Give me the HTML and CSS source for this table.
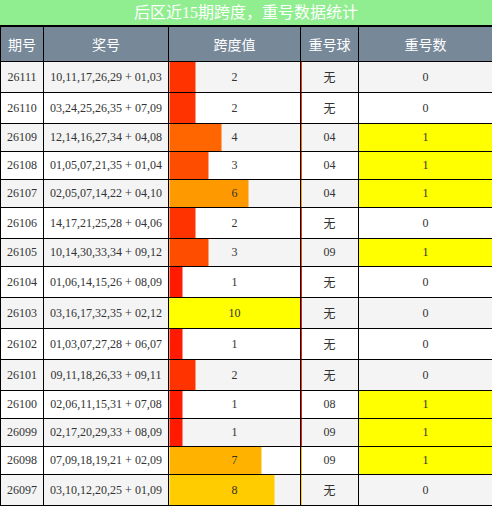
FILE: index.html
```html
<!DOCTYPE html>
<html lang="zh-CN">
<head>
  <meta charset="UTF-8" />
  <meta name="viewport" content="width=device-width, initial-scale=1.0" />
  <title>后区近15期跨度，重号数据统计</title>
  <link rel="stylesheet" href="styles.css">
</head>
<body>
  <div class="title">后区近15期跨度，重号数据统计</div>
  <table class="stats">
    <colgroup>
      <col class="c-issue">
      <col class="c-nums">
      <col class="c-span">
      <col class="c-ball">
      <col class="c-count">
    </colgroup>
    <thead>
      <tr>
        <th>期号</th>
        <th>奖号</th>
        <th>跨度值</th>
        <th>重号球</th>
        <th>重号数</th>
      </tr>
    </thead>
    <tbody>
      <tr><td>26111</td><td>10,11,17,26,29 + 01,03</td><td class="span" style="--w:20%;--c:#ff3300">2</td><td class="ball" style="--c:#ff3300">无</td><td>0</td></tr>
      <tr><td>26110</td><td>03,24,25,26,35 + 07,09</td><td class="span" style="--w:20%;--c:#ff3300">2</td><td class="ball" style="--c:#ff3300">无</td><td>0</td></tr>
      <tr><td>26109</td><td>12,14,16,27,34 + 04,08</td><td class="span" style="--w:40%;--c:#ff6600">4</td><td class="ball" style="--c:#ff6600">04</td><td class="hit">1</td></tr>
      <tr><td>26108</td><td>01,05,07,21,35 + 01,04</td><td class="span" style="--w:30%;--c:#ff4d00">3</td><td class="ball" style="--c:#ff4d00">04</td><td class="hit">1</td></tr>
      <tr><td>26107</td><td>02,05,07,14,22 + 04,10</td><td class="span" style="--w:60%;--c:#ff9900">6</td><td class="ball" style="--c:#ff9900">04</td><td class="hit">1</td></tr>
      <tr><td>26106</td><td>14,17,21,25,28 + 04,06</td><td class="span" style="--w:20%;--c:#ff3300">2</td><td class="ball" style="--c:#ff3300">无</td><td>0</td></tr>
      <tr><td>26105</td><td>10,14,30,33,34 + 09,12</td><td class="span" style="--w:30%;--c:#ff4d00">3</td><td class="ball" style="--c:#ff4d00">09</td><td class="hit">1</td></tr>
      <tr><td>26104</td><td>01,06,14,15,26 + 08,09</td><td class="span" style="--w:10%;--c:#ff1a00">1</td><td class="ball" style="--c:#ff1a00">无</td><td>0</td></tr>
      <tr><td>26103</td><td>03,16,17,32,35 + 02,12</td><td class="span full">10</td><td class="ball" style="--c:#ff1a00">无</td><td>0</td></tr>
      <tr><td>26102</td><td>01,03,07,27,28 + 06,07</td><td class="span" style="--w:10%;--c:#ff1a00">1</td><td class="ball" style="--c:#ff1a00">无</td><td>0</td></tr>
      <tr><td>26101</td><td>09,11,18,26,33 + 09,11</td><td class="span" style="--w:20%;--c:#ff3300">2</td><td class="ball" style="--c:#ff3300">无</td><td>0</td></tr>
      <tr><td>26100</td><td>02,06,11,15,31 + 07,08</td><td class="span" style="--w:10%;--c:#ff1a00">1</td><td class="ball" style="--c:#ff1a00">08</td><td class="hit">1</td></tr>
      <tr><td>26099</td><td>02,17,20,29,33 + 08,09</td><td class="span" style="--w:10%;--c:#ff1a00">1</td><td class="ball" style="--c:#ff1a00">09</td><td class="hit">1</td></tr>
      <tr><td>26098</td><td>07,09,18,19,21 + 02,09</td><td class="span" style="--w:70%;--c:#ffb300">7</td><td class="ball" style="--c:#ffb300">09</td><td class="hit">1</td></tr>
      <tr><td>26097</td><td>03,10,12,20,25 + 01,09</td><td class="span" style="--w:80%;--c:#ffcc00">8</td><td class="ball" style="--c:#ffcc00">无</td><td>0</td></tr>
    </tbody>
  </table>
</body>
</html>
```

FILE: styles.css
```css
* {
  margin: 0;
  padding: 0;
  box-sizing: content-box;
}
body {
  background-color: #fff;
  font-family: "Liberation Serif", "Noto Sans CJK SC", serif;
  color: #333;
  width: 492px;
}
.title {
  height: 25px;
  line-height: 25px;
  background-color: #90ee90;
  color: #fff;
  font-size: 16px;
  text-align: center;
  border-bottom: 1px solid #000;
}
.stats {
  width: 492px;
  border-collapse: collapse;
  table-layout: fixed;
  border: 1px solid #000;
}
.c-issue { width: 43px; }
.c-nums { width: 125px; }
.c-span { width: 132px; }
.c-ball { width: 58px; }
.c-count { width: 134px; }
.stats th {
  background-color: #778899;
  color: #fff;
  font-family: "Noto Sans CJK SC", sans-serif;
  font-size: 14px;
  font-weight: normal;
  padding: 7px 0;
  border: 1px solid #000;
}
.stats td {
  font-size: 12px;
  text-align: center;
  padding: 6px 0;
  border: 1px solid #000;
  white-space: nowrap;
}
.stats tbody tr:nth-child(odd) {
  background-color: #f4f4f4;
}
.stats tbody tr:nth-child(even) {
  background-color: #fff;
}
.span {
  background: linear-gradient(to right, var(--c) var(--w), transparent var(--w));
}
.span.full {
  background: #ffff00;
}
.ball {
  box-shadow: inset 1px 0 0 var(--c);
}
.hit {
  background-color: #ffff00;
}
```
